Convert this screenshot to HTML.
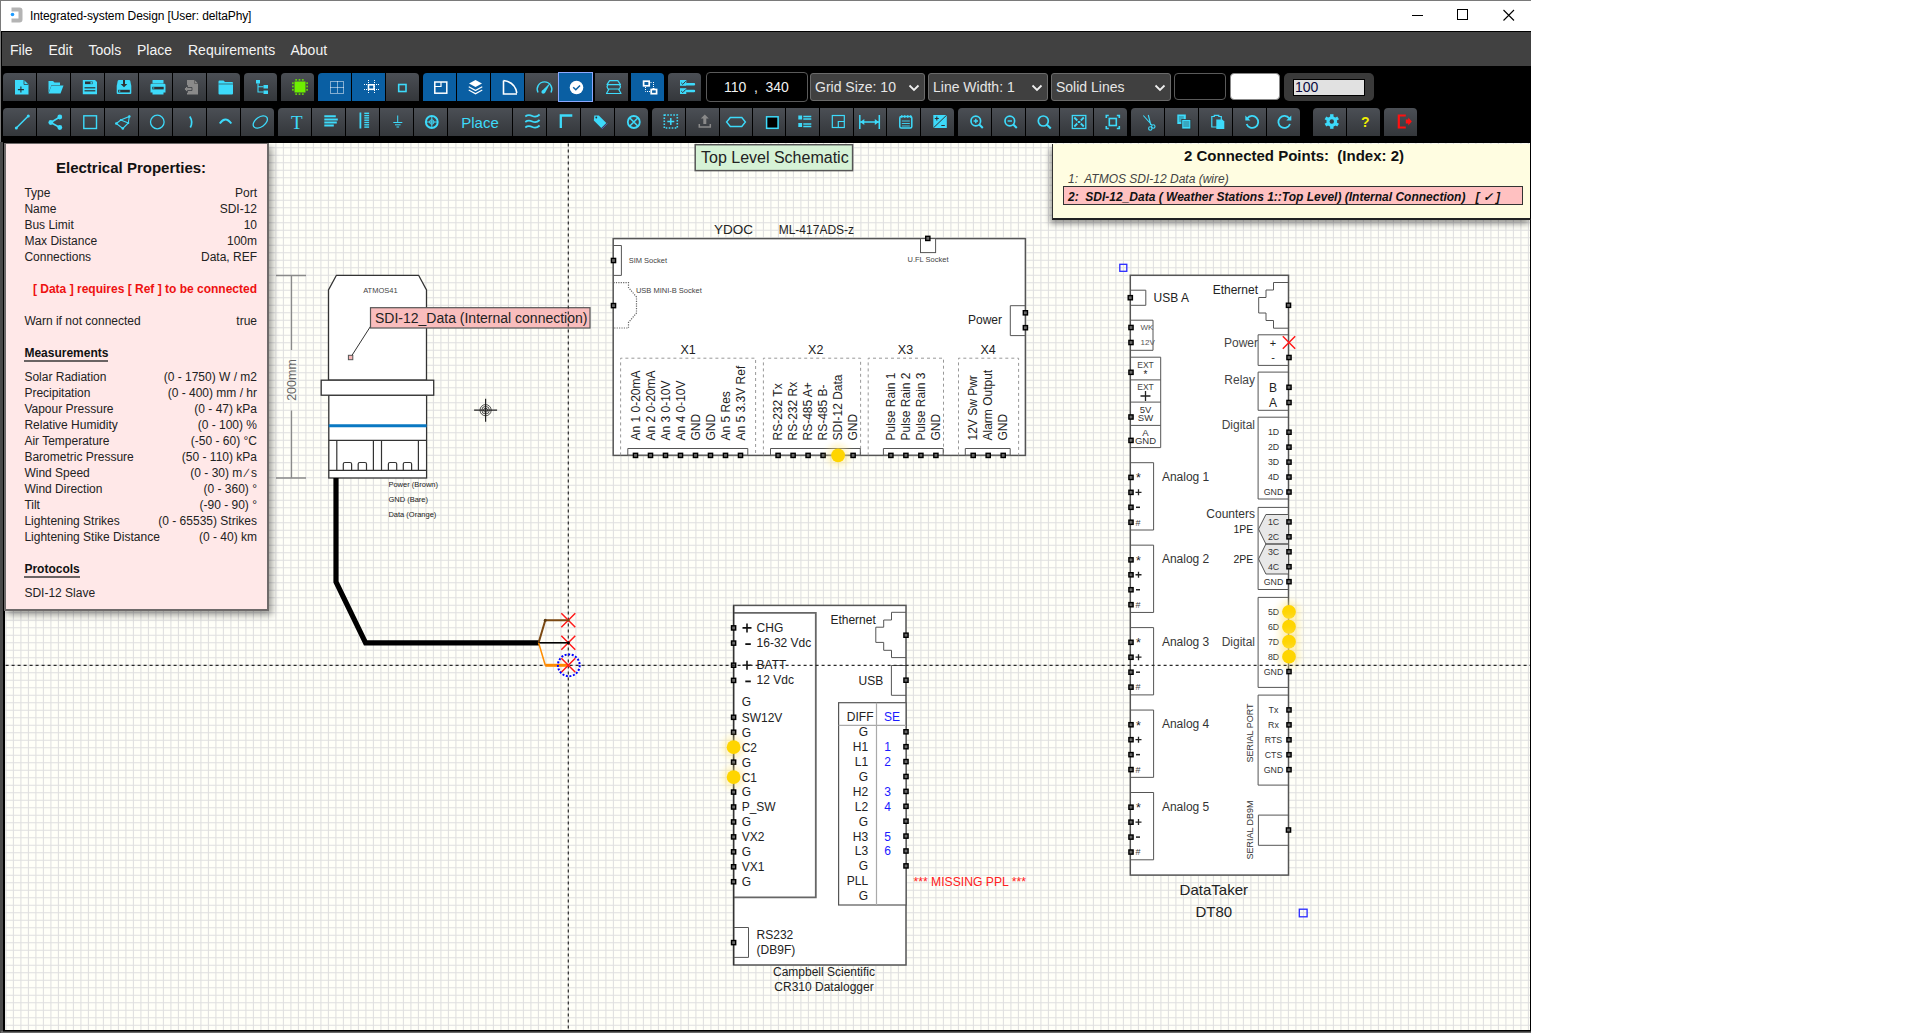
<!DOCTYPE html><html><head><meta charset="utf-8"><style>
*{margin:0;padding:0;box-sizing:border-box}
html,body{width:1906px;height:1033px;overflow:hidden;background:#fff;font-family:"Liberation Sans",sans-serif}
.a{position:absolute}
#win{position:absolute;left:0;top:0;width:1531px;height:1033px;background:#000;overflow:hidden}
#title{position:absolute;left:1px;top:1px;width:1530px;height:30px;background:#fff}
#menu{position:absolute;left:2px;top:32px;width:1529px;height:34px;background:#414141}
.mi{position:absolute;top:10px;font-size:14px;color:#f4f4f4;line-height:16px}
.b{position:absolute;height:28px;background:linear-gradient(#4b4f55,#34373b);}
.b.bl{background:#0a5fa3}
.b svg{position:absolute;left:0;top:0}
.sel{position:absolute;font-size:14px;color:#e6e6e6;background:#404040;border:1px solid #6a6a6a;border-radius:3px;height:28px;line-height:26px;padding-left:4px}
.txt{position:absolute;white-space:nowrap;line-height:1}
</style></head><body><div id="win"><div class="a" style="left:0;top:0;width:1531px;height:1px;background:#7a7a7a"></div><div class="a" style="left:0;top:0;width:1px;height:1033px;background:#7a7a7a"></div><div id="title"><svg class="a" style="left:9px;top:5px" width="16" height="18" viewBox="0 0 16 18"><path d="M1.5 1.5H9.5Q12.5 1.5 12.5 4.5V13.5Q12.5 16.5 9.5 16.5H1.5V12.5H8.5V5.5H1.5Z" fill="#b4b4b4"/><circle cx="2.5" cy="8.5" r="1.8" fill="#1e9bff"/></svg><div class="txt" style="left:29px;top:9px;font-size:12px;color:#000;letter-spacing:-0.1px">Integrated-system Design [User: deltaPhy]</div><svg class="a" style="left:1400px;top:-1px" width="130" height="30"><path d="M11 15.5H22" stroke="#000" stroke-width="1"/><rect x="56.5" y="9.5" width="10" height="10" fill="none" stroke="#000" stroke-width="1"/><path d="M102.5 10L113 20.5M113 10L102.5 20.5" stroke="#000" stroke-width="1.1"/></svg></div><div id="menu"><div class="mi" style="left:8px">File</div><div class="mi" style="left:46.5px">Edit</div><div class="mi" style="left:86.5px">Tools</div><div class="mi" style="left:135px">Place</div><div class="mi" style="left:186px">Requirements</div><div class="mi" style="left:288.5px">About</div></div><div class="b" style="left:3px;top:73px;width:33px;border-radius:4px 0 0 0;"><svg width="33" height="28" viewBox="0 0 33 28"><path d="M12 7H21L25.5 11.5V21.5H12Z" fill="#3ddafa"/><path d="M21 7V11.5H25.5" fill="none" stroke="#3a3d42" stroke-width=".8"/><path d="M14.9 16.6H20.9M17.9 13.6V19.6" stroke="#2b2e33" stroke-width="1.1"/></svg></div><div class="b" style="left:37px;top:73px;width:33px;border-radius:0;"><svg width="33" height="28" viewBox="0 0 33 28"><path d="M11.5 8H16L17.5 9.5H23V12H14.5L11.5 20Z" fill="#3ddafa"/><path d="M14.5 12.5H26.5L23.5 20.5H11.5Z" fill="#3ddafa"/></svg></div><div class="b" style="left:71px;top:73px;width:33px;border-radius:0;"><svg width="33" height="28" viewBox="0 0 33 28"><path d="M11.8 7H24L26 9V21.3H11.8Z" fill="#3ddafa"/><rect x="14" y="8.5" width="7.5" height="2.6" fill="#2f3236"/><rect x="19.5" y="8.8" width="1.4" height="2" fill="#3ddafa"/><rect x="13.5" y="14.2" width="10.8" height="1.2" fill="#2f3236"/><rect x="13.5" y="17.2" width="10.8" height="1.2" fill="#2f3236"/></svg></div><div class="b" style="left:105px;top:73px;width:33px;border-radius:0;"><svg width="33" height="28" viewBox="0 0 33 28"><path d="M14 7H24Q25 7 25.3 8L26.3 13V20Q26.3 21 25.3 21H12.7Q11.7 21 11.7 20V13L12.7 8Q13 7 14 7Z" fill="#3ddafa"/><path d="M18 7V11H15.7L19 14.3L22.3 11H20V7Z" fill="#2f3236"/><rect x="13.2" y="16.8" width="11.6" height="2.6" fill="#2f3236"/><rect x="14" y="17.5" width="1.3" height="1.2" fill="#3ddafa"/></svg></div><div class="b" style="left:139px;top:73px;width:33px;border-radius:0;"><svg width="33" height="28" viewBox="0 0 33 28"><rect x="13.5" y="7" width="11" height="3.5" rx=".5" fill="#3ddafa"/><path d="M11.5 12Q11.5 10.8 12.7 10.8H25.3Q26.5 10.8 26.5 12V19.5H24.5V21.5H13.5V19.5H11.5Z" fill="#3ddafa"/><rect x="13.3" y="13.8" width="11.4" height="2.6" fill="#2f3236"/><rect x="14" y="14.5" width="1.3" height="1" fill="#3ddafa"/></svg></div><div class="b" style="left:173px;top:73px;width:33px;border-radius:0;"><svg width="33" height="28" viewBox="0 0 33 28"><path d="M14 7H21.5L25 10.5V21.5H14Z" fill="#8a8a8a"/><path d="M21.5 7V10.5H25" fill="none" stroke="#555" stroke-width=".7"/><path d="M11 16L14.5 12.5V14.5H19V17.5H14.5V19.5Z" fill="#8a8a8a" stroke="#3a3d42" stroke-width=".8"/></svg></div><div class="b" style="left:207px;top:73px;width:33px;border-radius:0 4px 0 0;"><svg width="33" height="28" viewBox="0 0 33 28"><path d="M11.5 8.5Q11.5 7.5 12.5 7.5H16.5L18 9H25Q26 9 26 10V20.5Q26 21.5 25 21.5H12.5Q11.5 21.5 11.5 20.5Z" fill="#3ddafa"/><path d="M11.5 11H26" stroke="#2f3236" stroke-width=".6"/></svg></div><div class="b" style="left:244px;top:73px;width:33px;border-radius:4px 4px 0 0;"><svg width="33" height="28" viewBox="0 0 33 28"><rect x="12" y="7" width="4" height="3.5" fill="#3ddafa"/><rect x="19.5" y="12" width="4.5" height="3.5" fill="#3ddafa"/><rect x="19.5" y="17.5" width="4.5" height="3.5" fill="#3ddafa"/><path d="M14 10.5V19H19.5M14 13.7H19.5" fill="none" stroke="#3ddafa" stroke-width="1.1"/></svg></div><div class="b" style="left:281px;top:73px;width:33px;border-radius:4px 4px 0 0;"><svg width="33" height="28" viewBox="0 0 33 28"><rect x="13.5" y="8.5" width="11" height="11" fill="#6ef000"/><rect x="14.3" y="6.2" width="1.8" height="1.4" fill="#6ef000"/><rect x="14.3" y="20.4" width="1.8" height="1.4" fill="#6ef000"/><rect x="11.2" y="9.3" width="1.4" height="1.8" fill="#6ef000"/><rect x="25.4" y="9.3" width="1.4" height="1.8" fill="#6ef000"/><rect x="17.6" y="6.2" width="1.8" height="1.4" fill="#6ef000"/><rect x="17.6" y="20.4" width="1.8" height="1.4" fill="#6ef000"/><rect x="11.2" y="12.600000000000001" width="1.4" height="1.8" fill="#6ef000"/><rect x="25.4" y="12.600000000000001" width="1.4" height="1.8" fill="#6ef000"/><rect x="20.9" y="6.2" width="1.8" height="1.4" fill="#6ef000"/><rect x="20.9" y="20.4" width="1.8" height="1.4" fill="#6ef000"/><rect x="11.2" y="15.9" width="1.4" height="1.8" fill="#6ef000"/><rect x="25.4" y="15.9" width="1.4" height="1.8" fill="#6ef000"/></svg></div><div class="b bl" style="left:318px;top:73px;width:33px;border-radius:4px 0 0 0;"><svg width="33" height="28" viewBox="0 0 33 28"><path d="M12.5 8.5H25.5V20.5H12.5ZM19.5 8.5V20.5M12.5 14.5H25.5" fill="none" stroke="#fff" stroke-width="1" stroke-dasharray="1 1"/></svg></div><div class="b bl" style="left:352px;top:73px;width:33px;border-radius:0;"><svg width="33" height="28" viewBox="0 0 33 28"><rect x="16.5" y="11.8" width="5.5" height="4.5" fill="none" stroke="#fff" stroke-width="1.6"/><path d="M16.5 7V21M22.5 7V21M12 11.5H27M12 16.5H27" fill="none" stroke="#fff" stroke-width="1" stroke-dasharray="1 1"/></svg></div><div class="b" style="left:386px;top:73px;width:33px;border-radius:0 4px 0 0;"><svg width="33" height="28" viewBox="0 0 33 28"><rect x="12.7" y="11.5" width="7.3" height="7" fill="none" stroke="#3ddafa" stroke-width="1.6"/></svg></div><div class="b bl" style="left:423px;top:73px;width:33px;border-radius:4px 0 0 0;"><svg width="33" height="28" viewBox="0 0 33 28"><rect x="11.8" y="9" width="12" height="11.2" fill="none" stroke="#fff" stroke-width="1.5"/><path d="M11.8 13.5H18V9" fill="none" stroke="#fff" stroke-width="1.2"/></svg></div><div class="b bl" style="left:457px;top:73px;width:33px;border-radius:0;"><svg width="33" height="28" viewBox="0 0 33 28"><path d="M18.5 7L25 10.5L18.5 14L12 10.5Z" fill="#fff"/><path d="M12 13.3L18.5 16.8L25 13.3L25.5 14.3L18.5 18.3L11.5 14.3Z" fill="#fff"/><path d="M12 16.5L18.5 20L25 16.5L25.5 17.5L18.5 21.5L11.5 17.5Z" fill="#fff"/></svg></div><div class="b bl" style="left:491px;top:73px;width:33px;border-radius:0;"><svg width="33" height="28" viewBox="0 0 33 28"><path d="M12.5 7.5V21H26M12.5 7.5Q24 9 25.8 20" fill="none" stroke="#fff" stroke-width="1.6"/></svg></div><div class="b" style="left:525px;top:73px;width:33px;border-radius:0;"><svg width="33" height="28" viewBox="0 0 33 28"><path d="M13 19.5A7.3 7.3 0 1 1 26 19.5" fill="none" stroke="#3ddafa" stroke-width="1.4"/><path d="M16.8 18L25.8 9.3L19.8 20.2Z" fill="#3ddafa"/><circle cx="18.2" cy="19" r="1.8" fill="#3ddafa"/></svg></div><div class="a" style="left:558px;top:72px;width:35px;height:30px;border:1px solid #8ea9ff;background:#0a5fa3"><svg width="33" height="28" viewBox="0 0 33 28" style="position:absolute;left:0;top:0"><circle cx="17.5" cy="14.5" r="6.8" fill="#fff"/><path d="M14.2 14.3L16.8 16.8L21 12.5" fill="none" stroke="#0a5fa3" stroke-width="1.5"/></svg></div><div class="b" style="left:595px;top:73px;width:33px;border-radius:0;"><svg width="33" height="28" viewBox="0 0 33 28"><path d="M14.6 7.6H22.8L25.5 11.6H12ZM13 11.6L12 13.8L13 16H24.5L25.5 13.8L24.5 11.6M14 16H23.5L26 20.5H11.5Z" fill="none" stroke="#3ddafa" stroke-width="1.2" stroke-linejoin="round"/></svg></div><div class="b bl" style="left:631px;top:73px;width:33px;border-radius:0 4px 0 0;"><svg width="33" height="28" viewBox="0 0 33 28"><rect x="12.6" y="8.2" width="5.6" height="4.6" fill="none" stroke="#fff" stroke-width="1.7"/><rect x="20.2" y="16.5" width="5.4" height="4.2" fill="none" stroke="#fff" stroke-width="1.7"/><path d="M19.5 9.5H21.5M22.5 9V14M14.5 14V18.5H19" fill="none" stroke="#fff" stroke-width="1" stroke-dasharray="1 1"/><rect x="21.5" y="15" width="2" height="1.5" fill="#fff"/></svg></div><div class="b" style="left:668px;top:73px;width:33px;border-radius:4px 4px 0 0;"><svg width="33" height="28" viewBox="0 0 33 28"><rect x="12" y="7" width="6.3" height="5.8" fill="#3ddafa"/><rect x="12" y="15.2" width="6.3" height="5.8" fill="#3ddafa"/><path d="M13.2 9.8L14.8 11.4L17.8 8.2M13.2 18L14.8 19.6L17.8 16.4" fill="none" stroke="#2f3236" stroke-width="1"/><path d="M19 11.3H26M19 18H26" stroke="#3ddafa" stroke-width="2.4" stroke-linecap="round"/></svg></div><div class="a" style="left:706px;top:72px;width:102px;height:30px;background:#000;border:1px solid #5a5a5a;border-radius:4px;color:#f2f2f2;font-size:14px;line-height:28px"><span class="a" style="left:17px;top:-0.5px">110</span><span class="a" style="left:47px;top:-0.5px">,</span><span class="a" style="left:58.5px;top:-0.5px">340</span></div><div class="sel" style="left:810px;top:73px;width:115px">Grid Size: 10<svg class="a" style="left:97px;top:9px" width="12" height="10"><path d="M1.5 2.5L6 7L10.5 2.5" fill="none" stroke="#eee" stroke-width="1.8"/></svg></div><div class="sel" style="left:928px;top:73px;width:120px">Line Width: 1<svg class="a" style="left:102px;top:9px" width="12" height="10"><path d="M1.5 2.5L6 7L10.5 2.5" fill="none" stroke="#eee" stroke-width="1.8"/></svg></div><div class="sel" style="left:1051px;top:73px;width:120px">Solid Lines<svg class="a" style="left:102px;top:9px" width="12" height="10"><path d="M1.5 2.5L6 7L10.5 2.5" fill="none" stroke="#eee" stroke-width="1.8"/></svg></div><div class="a" style="left:1174px;top:73px;width:52px;height:27px;background:#000;border:1px solid #5a5a5a;border-radius:4px"></div><div class="a" style="left:1230px;top:73px;width:50px;height:27px;background:#fff;border:1px solid #888;border-radius:4px"></div><div class="a" style="left:1284px;top:73px;width:90px;height:28px;background:#3a3a3a;border-radius:5px"><div class="a" style="left:9px;top:6px;width:72px;height:17px;background:#e1e1e1;border:1px solid #000;font-size:14px;line-height:15px;color:#0a0a40;padding-left:1px">100</div></div><div class="b" style="left:3px;top:108px;width:33px;border-radius:4px 0 0 0;"><svg width="33" height="28" viewBox="0 0 33 28"><g transform="translate(0.8 -1)"><path d="M12.5 21L24.5 9" stroke="#3ddafa" stroke-width="1.5"/><circle cx="12.5" cy="21" r="1.5" fill="#3ddafa"/><circle cx="24.5" cy="9" r="1.5" fill="#3ddafa"/></g></svg></div><div class="b" style="left:37px;top:108px;width:33px;border-radius:0;"><svg width="33" height="28" viewBox="0 0 33 28"><g transform="translate(0.8 -1)"><circle cx="13" cy="15.5" r="2.4" fill="#3ddafa"/><circle cx="22" cy="10" r="2.4" fill="#3ddafa"/><circle cx="22" cy="20.5" r="2.4" fill="#3ddafa"/><path d="M13 15.5L22 10M13 15.5L22 20.5" stroke="#3ddafa" stroke-width="1.5"/></g></svg></div><div class="b" style="left:71px;top:108px;width:33px;border-radius:0;"><svg width="33" height="28" viewBox="0 0 33 28"><g transform="translate(0.8 -1)"><rect x="12" y="8.8" width="12.7" height="12.7" fill="none" stroke="#3ddafa" stroke-width="1.4"/></g></svg></div><div class="b" style="left:105px;top:108px;width:33px;border-radius:0;"><svg width="33" height="28" viewBox="0 0 33 28"><g transform="translate(0.8 -1)"><path d="M10.5 16.5L15 13L23.5 9.5L22.5 16L17 21.5Z M15 13L22.5 16" fill="none" stroke="#3ddafa" stroke-width="1.1"/><circle cx="10.5" cy="16.5" r="1.3" fill="#3ddafa"/><circle cx="23.5" cy="9.5" r="1.3" fill="#3ddafa"/><circle cx="17" cy="21.5" r="1.3" fill="#3ddafa"/><circle cx="15" cy="13" r="1" fill="#3ddafa"/><circle cx="22.5" cy="16" r="1" fill="#3ddafa"/></g></svg></div><div class="b" style="left:139px;top:108px;width:33px;border-radius:0;"><svg width="33" height="28" viewBox="0 0 33 28"><g transform="translate(0.8 -1)"><circle cx="17.5" cy="15" r="6.8" fill="none" stroke="#3ddafa" stroke-width="1.3"/></g></svg></div><div class="b" style="left:173px;top:108px;width:33px;border-radius:0;"><svg width="33" height="28" viewBox="0 0 33 28"><g transform="translate(0.8 -1)"><path d="M16 9.5Q19.5 15 16.5 20.5" fill="none" stroke="#3ddafa" stroke-width="1.7"/></g></svg></div><div class="b" style="left:207px;top:108px;width:33px;border-radius:0;"><svg width="33" height="28" viewBox="0 0 33 28"><g transform="translate(0.8 -1)"><path d="M12 16.5Q17.5 8.5 23.5 16.5" fill="none" stroke="#3ddafa" stroke-width="2"/></g></svg></div><div class="b" style="left:241px;top:108px;width:33px;border-radius:0 4px 0 0;"><svg width="33" height="28" viewBox="0 0 33 28"><g transform="translate(0.8 -1)"><ellipse cx="18.5" cy="15" rx="8" ry="4.8" transform="rotate(-35 18.5 15)" fill="none" stroke="#3ddafa" stroke-width="1.3"/></g></svg></div><div class="b" style="left:278px;top:108px;width:33px;border-radius:4px 0 0 0;"><svg width="33" height="28" viewBox="0 0 33 28"><g transform="translate(0.8 -1)"><text x="18" y="22" font-family="Liberation Serif" font-size="19" fill="#3ddafa" text-anchor="middle">T</text></g></svg></div><div class="b" style="left:312px;top:108px;width:33px;border-radius:0;"><svg width="33" height="28" viewBox="0 0 33 28"><g transform="translate(0.8 -1)"><path d="M11.5 9.2H23M11.5 12.5H25M11.5 15.5H24M11.5 18.5H21" stroke="#3ddafa" stroke-width="2"/></g></svg></div><div class="b" style="left:346px;top:108px;width:33px;border-radius:0;"><svg width="33" height="28" viewBox="0 0 33 28"><g transform="translate(0.8 -1)"><path d="M13.6 5.5V21.5" stroke="#3ddafa" stroke-width="1.8"/><rect x="17.5" y="5.6" width="4.8" height="1.4" fill="#3ddafa"/><rect x="17.5" y="7.8999999999999995" width="4.8" height="1.4" fill="#3ddafa"/><rect x="17.5" y="10.2" width="4.8" height="1.4" fill="#3ddafa"/><rect x="17.5" y="12.5" width="4.8" height="1.4" fill="#3ddafa"/><rect x="17.5" y="14.799999999999999" width="4.8" height="1.4" fill="#3ddafa"/><rect x="17.5" y="17.1" width="4.8" height="1.4" fill="#3ddafa"/><rect x="17.5" y="19.4" width="4.8" height="1.4" fill="#3ddafa"/></g></svg></div><div class="b" style="left:380px;top:108px;width:33px;border-radius:0;"><svg width="33" height="28" viewBox="0 0 33 28"><g transform="translate(0.8 -1)"><path d="M16.9 8.5V15.5M12.5 15.5H21.5M14.2 17.8H19.8M15.7 20H18.3" stroke="#3ddafa" stroke-width="1"/></g></svg></div><div class="b" style="left:414px;top:108px;width:33px;border-radius:0;"><svg width="33" height="28" viewBox="0 0 33 28"><g transform="translate(0.8 -1)"><circle cx="17" cy="15" r="5.9" fill="none" stroke="#3ddafa" stroke-width="2"/><path d="M17 9V21M11 15H23" stroke="#3ddafa" stroke-width="1"/><circle cx="17" cy="15" r="2.2" fill="none" stroke="#3ddafa" stroke-width="1"/></g></svg></div><div class="b" style="left:448px;top:108px;width:64px"><div class="a" style="left:0;width:64px;text-align:center;top:7px;font-size:15px;color:#3ddafa;line-height:15px">Place</div></div><div class="b" style="left:513px;top:108px;width:33px;border-radius:0;"><svg width="33" height="28" viewBox="0 0 33 28"><g transform="translate(0.8 -1)"><path d="M11.5 9.5Q14.5 7.2 18.5 9T25.8 7.5M11.5 15Q14.5 12.7 18.5 14.5T25.8 13M11.5 20.5Q14.5 18.2 18.5 20T25.8 18.5" fill="none" stroke="#3ddafa" stroke-width="1.8"/></g></svg></div><div class="b" style="left:547px;top:108px;width:33px;border-radius:0;"><svg width="33" height="28" viewBox="0 0 33 28"><g transform="translate(0.8 -1)"><path d="M13 21V8.5H24.5" fill="none" stroke="#3ddafa" stroke-width="2.3"/></g></svg></div><div class="b" style="left:581px;top:108px;width:33px;border-radius:0;"><svg width="33" height="28" viewBox="0 0 33 28"><g transform="translate(0.8 -1)"><path d="M12.5 8.5H17L24.5 16L19.5 21L12 13.5Z" fill="#3ddafa"/><circle cx="14.5" cy="10.5" r=".9" fill="#2f3236"/><path d="M25.5 16.5L20 22" stroke="#5a70f0" stroke-width=".7"/></g></svg></div><div class="b" style="left:615px;top:108px;width:33px;border-radius:0 4px 0 0;"><svg width="33" height="28" viewBox="0 0 33 28"><g transform="translate(0.8 -1)"><circle cx="18" cy="15" r="6" fill="none" stroke="#3ddafa" stroke-width="1.8"/><path d="M14 11L22 19M22 11L14 19" stroke="#3ddafa" stroke-width="1.6"/></g></svg></div><div class="b" style="left:652px;top:108px;width:33px;border-radius:4px 0 0 0;"><svg width="33" height="28" viewBox="0 0 33 28"><g transform="translate(0.8 -1)"><rect x="11.5" y="8" width="13" height="13" fill="none" stroke="#3ddafa" stroke-width="1.6" stroke-dasharray="1.6 1.4"/><path d="M18 11V18M14.5 14.5H21.5" stroke="#3ddafa" stroke-width="1.5"/></g></svg></div><div class="b" style="left:686px;top:108px;width:33px;border-radius:0;"><svg width="33" height="28" viewBox="0 0 33 28"><g transform="translate(0.8 -1)"><path d="M18 7.5L22 11.5H19.5V17H16.5V11.5H14Z" fill="#8a8a8a"/><path d="M12.5 17V20H23.5V17" fill="none" stroke="#8a8a8a" stroke-width="1.5"/></g></svg></div><div class="b" style="left:720px;top:108px;width:32px;border-radius:0;"><svg width="32" height="28" viewBox="0 0 32 28"><g transform="translate(0.8 -1)"><path d="M5.8 15L9.5 10.5H21L24.6 15L21 19.5H9.5Z" fill="none" stroke="#3ddafa" stroke-width="1.4"/></g></svg></div><div class="b" style="left:753px;top:108px;width:32px;border-radius:0;"><svg width="32" height="28" viewBox="0 0 32 28"><g transform="translate(0.8 -1)"><rect x="12.8" y="9.8" width="11.5" height="11.5" fill="#000" stroke="#3ddafa" stroke-width="1.5"/></g></svg></div><div class="b" style="left:786px;top:108px;width:33px;border-radius:0;"><svg width="33" height="28" viewBox="0 0 33 28"><g transform="translate(0.8 -1)"><rect x="11.5" y="8.5" width="3.8" height="4" fill="#3ddafa"/><rect x="11.5" y="16" width="3.8" height="4" fill="#3ddafa"/><path d="M16.5 9.5H24.5M16.5 12H24.5M16.5 17H24.5M16.5 19.5H24.5" stroke="#3ddafa" stroke-width="1.6"/></g></svg></div><div class="b" style="left:820px;top:108px;width:33px;border-radius:0;"><svg width="33" height="28" viewBox="0 0 33 28"><g transform="translate(0.8 -1)"><rect x="11.5" y="8.5" width="12" height="12" fill="none" stroke="#3ddafa" stroke-width="1.2"/><path d="M17.5 20.5V14.5H23.5" fill="none" stroke="#3ddafa" stroke-width="1.2"/></g></svg></div><div class="b" style="left:854px;top:108px;width:32px;border-radius:0;"><svg width="32" height="28" viewBox="0 0 32 28"><g transform="translate(0.8 -1)"><path d="M5 8V22M24.5 8V22M5.5 15H24" stroke="#3ddafa" stroke-width="1.5"/><path d="M5.5 15L9.5 12V18ZM24 15L20 12V18Z" fill="#3ddafa"/></g></svg></div><div class="b" style="left:887px;top:108px;width:33px;border-radius:0;"><svg width="33" height="28" viewBox="0 0 33 28"><g transform="translate(0.8 -1)"><rect x="12" y="9.5" width="12" height="11.5" rx="1.5" fill="none" stroke="#3ddafa" stroke-width="1.5"/><path d="M14 8V11M17 8V11M20 8V11M23 8V11" stroke="#3ddafa" stroke-width="1"/><path d="M14 14H22M14 16.5H22M14 19H22" stroke="#3ddafa" stroke-width=".9"/></g></svg></div><div class="b" style="left:921px;top:108px;width:33px;border-radius:0 4px 0 0;"><svg width="33" height="28" viewBox="0 0 33 28"><g transform="translate(0.8 -1)"><rect x="11.5" y="8" width="13.5" height="13" fill="#3ddafa"/><path d="M11.5 21L25 8" stroke="#2f3236" stroke-width="1"/><path d="M13 11.5H17M15 9.5V13.5M19.5 18.5H23" stroke="#2f3236" stroke-width="1.1"/></g></svg></div><div class="b" style="left:958px;top:108px;width:33px;border-radius:4px 0 0 0;"><svg width="33" height="28" viewBox="0 0 33 28"><g transform="translate(0.8 -1)"><circle cx="17" cy="14" r="4.8" fill="none" stroke="#3ddafa" stroke-width="1.7"/><path d="M20.5 17.5L24 21" stroke="#3ddafa" stroke-width="2"/><path d="M14.8 14H19.2M17 11.8V16.2" stroke="#3ddafa" stroke-width="1.4"/></g></svg></div><div class="b" style="left:992px;top:108px;width:33px;border-radius:0;"><svg width="33" height="28" viewBox="0 0 33 28"><g transform="translate(0.8 -1)"><circle cx="17" cy="14" r="4.8" fill="none" stroke="#3ddafa" stroke-width="1.7"/><path d="M20.5 17.5L24 21" stroke="#3ddafa" stroke-width="2"/><path d="M14.8 14H19.2" stroke="#3ddafa" stroke-width="1.4"/></g></svg></div><div class="b" style="left:1026px;top:108px;width:33px;border-radius:0;"><svg width="33" height="28" viewBox="0 0 33 28"><g transform="translate(0.8 -1)"><circle cx="16.5" cy="14" r="5" fill="none" stroke="#3ddafa" stroke-width="1.7"/><path d="M20.2 17.7L24 21.5" stroke="#3ddafa" stroke-width="2"/></g></svg></div><div class="b" style="left:1060px;top:108px;width:33px;border-radius:0;"><svg width="33" height="28" viewBox="0 0 33 28"><g transform="translate(0.8 -1)"><rect x="11.5" y="8.5" width="13.5" height="13" fill="none" stroke="#3ddafa" stroke-width="1.3"/><path d="M13.5 10.5L16.5 13.5M23 10.5L20 13.5M13.5 19.5L16.5 16.5M23 19.5L20 16.5" stroke="#3ddafa" stroke-width="1.8"/><rect x="17" y="14" width="2.5" height="2" fill="#3ddafa"/></g></svg></div><div class="b" style="left:1094px;top:108px;width:33px;border-radius:0 4px 0 0;"><svg width="33" height="28" viewBox="0 0 33 28"><g transform="translate(0.8 -1)"><path d="M11.5 11V8.5H14M22 8.5H24.5V11M24.5 19V21.5H22M14 21.5H11.5V19" fill="none" stroke="#3ddafa" stroke-width="1.6"/><rect x="14.5" y="11.5" width="7" height="7" fill="none" stroke="#3ddafa" stroke-width="1.6"/></g></svg></div><div class="b" style="left:1131px;top:108px;width:33px;border-radius:4px 0 0 0;"><svg width="33" height="28" viewBox="0 0 33 28"><g transform="translate(0.8 -1)"><path d="M11.5 8.5L20 18M16.5 8L19 18" stroke="#3ddafa" stroke-width="1.1"/><circle cx="21.5" cy="19.5" r="1.7" fill="none" stroke="#3ddafa" stroke-width="1.1"/><circle cx="18.5" cy="21.5" r="1.7" fill="none" stroke="#3ddafa" stroke-width="1.1"/></g></svg></div><div class="b" style="left:1165px;top:108px;width:33px;border-radius:0;"><svg width="33" height="28" viewBox="0 0 33 28"><g transform="translate(0.8 -1)"><rect x="11.5" y="7.5" width="8.5" height="9.5" fill="#3ddafa"/><rect x="16" y="12.5" width="9" height="9.5" fill="#3ddafa" stroke="#2f3236" stroke-width=".8"/><path d="M13 10H18M13 12H18M13 14H15.5M17.5 15H23.5M17.5 17H23.5M17.5 19H23.5" stroke="#2f3236" stroke-width=".6"/></g></svg></div><div class="b" style="left:1199px;top:108px;width:33px;border-radius:0;"><svg width="33" height="28" viewBox="0 0 33 28"><g transform="translate(0.8 -1)"><path d="M12 9.5H14.5V8.3H19V9.5H21.5V20H12Z" fill="none" stroke="#3ddafa" stroke-width="1.2"/><path d="M16.5 12.5H22.5L24.5 14.5V22H16.5Z" fill="#3ddafa"/></g></svg></div><div class="b" style="left:1233px;top:108px;width:33px;border-radius:0;"><svg width="33" height="28" viewBox="0 0 33 28"><g transform="translate(0.8 -1)"><path d="M13.5 11.5A6 6 0 1 1 12.8 17" fill="none" stroke="#3ddafa" stroke-width="1.8"/><path d="M11.5 8.5V13.5H16.5Z" fill="#3ddafa"/></g></svg></div><div class="b" style="left:1267px;top:108px;width:33px;border-radius:0 4px 0 0;"><svg width="33" height="28" viewBox="0 0 33 28"><g transform="translate(0.8 -1)"><path d="M21.5 11.5A6 6 0 1 0 22.2 17" fill="none" stroke="#3ddafa" stroke-width="1.8"/><path d="M23.5 8.5V13.5H18.5Z" fill="#3ddafa"/></g></svg></div><div class="b" style="left:1313px;top:108px;width:33px;border-radius:4px 0 0 0;"><svg width="33" height="28" viewBox="0 0 33 28"><g transform="translate(0.8 -1)"><rect x="16.3" y="7.2" width="3.4" height="3" fill="#3ddafa" transform="rotate(0 18 14.5)"/><rect x="16.3" y="7.2" width="3.4" height="3" fill="#3ddafa" transform="rotate(60 18 14.5)"/><rect x="16.3" y="7.2" width="3.4" height="3" fill="#3ddafa" transform="rotate(120 18 14.5)"/><rect x="16.3" y="7.2" width="3.4" height="3" fill="#3ddafa" transform="rotate(180 18 14.5)"/><rect x="16.3" y="7.2" width="3.4" height="3" fill="#3ddafa" transform="rotate(240 18 14.5)"/><rect x="16.3" y="7.2" width="3.4" height="3" fill="#3ddafa" transform="rotate(300 18 14.5)"/><circle cx="18" cy="14.5" r="5.3" fill="#3ddafa"/><circle cx="18" cy="14.5" r="2.2" fill="#3a3d42"/></g></svg></div><div class="b" style="left:1347px;top:108px;width:33px;border-radius:0 4px 0 0;"><svg width="33" height="28" viewBox="0 0 33 28"><g transform="translate(0.8 -1)"><text x="17.5" y="19.5" font-family="Liberation Sans" font-weight="bold" font-size="14" fill="#f0f000" text-anchor="middle">?</text></g></svg></div><div class="b" style="left:1384px;top:108px;width:33px;border-radius:4px 4px 0 0;"><svg width="33" height="28" viewBox="0 0 33 28"><g transform="translate(0.8 -1)"><path d="M21 8.5H14V20.5H21" fill="none" stroke="#ff1010" stroke-width="2.2"/><path d="M21 12.5H23.5V10.5L27 14.5L23.5 18.5V16.5H21Z" fill="#ff1010"/></g></svg></div><svg class="a" style="left:0;top:0" width="1531" height="1033" viewBox="0 0 1531 1033"><defs><filter id="blur" x="-1" y="-1" width="3" height="3"><feGaussianBlur stdDeviation="3"/></filter><filter id="blur2" x="-1" y="-1" width="3" height="3"><feGaussianBlur stdDeviation="1.5"/></filter><clipPath id="cclip"><rect x="5" y="143" width="1525" height="887"/></clipPath><filter id="shadow" x="-.1" y="-.1" width="1.2" height="1.2"><feGaussianBlur stdDeviation="3"/></filter></defs><rect x="0" y="142" width="3" height="891" fill="#4a4a4a"/><rect x="1" y="1031" width="1530" height="2" fill="#6a6a6a"/><g clip-path="url(#cclip)"><rect x="5" y="143" width="1525" height="887" fill="#fffff8"/><path d="M5.899999999999977 143V1030M13.399999999999977 143V1030M20.899999999999977 143V1030M28.399999999999977 143V1030M35.89999999999998 143V1030M43.39999999999998 143V1030M50.89999999999998 143V1030M58.39999999999998 143V1030M65.89999999999998 143V1030M73.39999999999998 143V1030M80.89999999999998 143V1030M88.39999999999998 143V1030M95.89999999999998 143V1030M103.39999999999998 143V1030M110.89999999999998 143V1030M118.39999999999998 143V1030M125.89999999999998 143V1030M133.39999999999998 143V1030M140.89999999999998 143V1030M148.39999999999998 143V1030M155.89999999999998 143V1030M163.39999999999998 143V1030M170.89999999999998 143V1030M178.39999999999998 143V1030M185.89999999999998 143V1030M193.39999999999998 143V1030M200.89999999999998 143V1030M208.39999999999998 143V1030M215.89999999999998 143V1030M223.39999999999998 143V1030M230.89999999999998 143V1030M238.39999999999998 143V1030M245.89999999999998 143V1030M253.39999999999998 143V1030M260.9 143V1030M268.4 143V1030M275.9 143V1030M283.4 143V1030M290.9 143V1030M298.4 143V1030M305.9 143V1030M313.4 143V1030M320.9 143V1030M328.4 143V1030M335.9 143V1030M343.4 143V1030M350.9 143V1030M358.4 143V1030M365.9 143V1030M373.4 143V1030M380.9 143V1030M388.4 143V1030M395.9 143V1030M403.4 143V1030M410.9 143V1030M418.4 143V1030M425.9 143V1030M433.4 143V1030M440.9 143V1030M448.4 143V1030M455.9 143V1030M463.4 143V1030M470.9 143V1030M478.4 143V1030M485.9 143V1030M493.4 143V1030M500.9 143V1030M508.4 143V1030M515.9 143V1030M523.4 143V1030M530.9 143V1030M538.4 143V1030M545.9 143V1030M553.4 143V1030M560.9 143V1030M568.4 143V1030M575.9 143V1030M583.4 143V1030M590.9 143V1030M598.4 143V1030M605.9 143V1030M613.4 143V1030M620.9 143V1030M628.4 143V1030M635.9 143V1030M643.4 143V1030M650.9 143V1030M658.4 143V1030M665.9 143V1030M673.4 143V1030M680.9 143V1030M688.4 143V1030M695.9 143V1030M703.4 143V1030M710.9 143V1030M718.4 143V1030M725.9 143V1030M733.4 143V1030M740.9 143V1030M748.4 143V1030M755.9 143V1030M763.4 143V1030M770.9 143V1030M778.4 143V1030M785.9 143V1030M793.4 143V1030M800.9 143V1030M808.4 143V1030M815.9 143V1030M823.4 143V1030M830.9 143V1030M838.4 143V1030M845.9 143V1030M853.4 143V1030M860.9 143V1030M868.4 143V1030M875.9 143V1030M883.4 143V1030M890.9 143V1030M898.4 143V1030M905.9 143V1030M913.4 143V1030M920.9 143V1030M928.4 143V1030M935.9 143V1030M943.4 143V1030M950.9 143V1030M958.4 143V1030M965.9 143V1030M973.4 143V1030M980.9 143V1030M988.4 143V1030M995.9 143V1030M1003.4 143V1030M1010.9 143V1030M1018.4 143V1030M1025.9 143V1030M1033.4 143V1030M1040.9 143V1030M1048.4 143V1030M1055.9 143V1030M1063.4 143V1030M1070.9 143V1030M1078.4 143V1030M1085.9 143V1030M1093.4 143V1030M1100.9 143V1030M1108.4 143V1030M1115.9 143V1030M1123.4 143V1030M1130.9 143V1030M1138.4 143V1030M1145.9 143V1030M1153.4 143V1030M1160.9 143V1030M1168.4 143V1030M1175.9 143V1030M1183.4 143V1030M1190.9 143V1030M1198.4 143V1030M1205.9 143V1030M1213.4 143V1030M1220.9 143V1030M1228.4 143V1030M1235.9 143V1030M1243.4 143V1030M1250.9 143V1030M1258.4 143V1030M1265.9 143V1030M1273.4 143V1030M1280.9 143V1030M1288.4 143V1030M1295.9 143V1030M1303.4 143V1030M1310.9 143V1030M1318.4 143V1030M1325.9 143V1030M1333.4 143V1030M1340.9 143V1030M1348.4 143V1030M1355.9 143V1030M1363.4 143V1030M1370.9 143V1030M1378.4 143V1030M1385.9 143V1030M1393.4 143V1030M1400.9 143V1030M1408.4 143V1030M1415.9 143V1030M1423.4 143V1030M1430.9 143V1030M1438.4 143V1030M1445.9 143V1030M1453.4 143V1030M1460.9 143V1030M1468.4 143V1030M1475.9 143V1030M1483.4 143V1030M1490.9 143V1030M1498.4 143V1030M1505.9 143V1030M1513.4 143V1030M1520.9 143V1030M1528.4 143V1030M5 147.8H1530M5 155.3H1530M5 162.8H1530M5 170.3H1530M5 177.8H1530M5 185.3H1530M5 192.8H1530M5 200.3H1530M5 207.8H1530M5 215.3H1530M5 222.8H1530M5 230.3H1530M5 237.8H1530M5 245.3H1530M5 252.8H1530M5 260.3H1530M5 267.8H1530M5 275.3H1530M5 282.8H1530M5 290.3H1530M5 297.8H1530M5 305.3H1530M5 312.8H1530M5 320.3H1530M5 327.8H1530M5 335.3H1530M5 342.8H1530M5 350.3H1530M5 357.8H1530M5 365.3H1530M5 372.8H1530M5 380.3H1530M5 387.8H1530M5 395.3H1530M5 402.8H1530M5 410.3H1530M5 417.8H1530M5 425.3H1530M5 432.8H1530M5 440.3H1530M5 447.8H1530M5 455.3H1530M5 462.8H1530M5 470.3H1530M5 477.8H1530M5 485.3H1530M5 492.8H1530M5 500.3H1530M5 507.8H1530M5 515.3H1530M5 522.8H1530M5 530.3H1530M5 537.8H1530M5 545.3H1530M5 552.8H1530M5 560.3H1530M5 567.8H1530M5 575.3H1530M5 582.8H1530M5 590.3H1530M5 597.8H1530M5 605.3H1530M5 612.8H1530M5 620.3H1530M5 627.8H1530M5 635.3H1530M5 642.8H1530M5 650.3H1530M5 657.8H1530M5 665.3H1530M5 672.8H1530M5 680.3H1530M5 687.8H1530M5 695.3H1530M5 702.8H1530M5 710.3H1530M5 717.8H1530M5 725.3H1530M5 732.8H1530M5 740.3H1530M5 747.8H1530M5 755.3H1530M5 762.8H1530M5 770.3H1530M5 777.8H1530M5 785.3H1530M5 792.8H1530M5 800.3H1530M5 807.8H1530M5 815.3H1530M5 822.8H1530M5 830.3H1530M5 837.8H1530M5 845.3H1530M5 852.8H1530M5 860.3H1530M5 867.8H1530M5 875.3H1530M5 882.8H1530M5 890.3H1530M5 897.8H1530M5 905.3H1530M5 912.8H1530M5 920.3H1530M5 927.8H1530M5 935.3H1530M5 942.8H1530M5 950.3H1530M5 957.8H1530M5 965.3H1530M5 972.8H1530M5 980.3H1530M5 987.8H1530M5 995.3H1530M5 1002.8H1530M5 1010.3H1530M5 1017.8H1530M5 1025.3H1530" stroke="#e0e0e0" stroke-width="1.1" fill="none"/><g font-family="Liberation Sans"><path d="M474.1 410.2H497.1M485.6 398.7V421.7" stroke="#222" stroke-width="1.2"/><circle cx="485.6" cy="410.2" r="5.6" fill="none" stroke="#222" stroke-width=".8"/><circle cx="485.6" cy="410.2" r="3.8" fill="none" stroke="#222" stroke-width=".8"/><circle cx="485.6" cy="410.2" r="2" fill="none" stroke="#222" stroke-width=".8"/><path d="M276 275.5H306M291.5 275.5V350M276 478H306M291.5 410.5V478" stroke="#8a8a8a" stroke-width="1.3" fill="none"/><text x="0" y="0" font-size="12.5" fill="#666" text-anchor="middle" transform="translate(296 380) rotate(-90)">200mm</text><path d="M336.4 275.3H418.6L426.5 290V380.2H328.5V290Z" fill="#fff" stroke="#333" stroke-width="1.3"/><rect x="328.8" y="395.2" width="97.8" height="82.8" fill="#fff" stroke="#333" stroke-width="1.3"/><rect x="321.2" y="380.2" width="112.5" height="15" fill="#fff" stroke="#333" stroke-width="1.3"/><path d="M328.8 425.7H426.6" stroke="#0a78c2" stroke-width="3"/><path d="M328.8 440.3H426.6M328.8 470.3H426.6M336.8 440.3V470.3M373.4 440.3V470.3M381.5 440.3V470.3M418.4 440.3V470.3" stroke="#333" stroke-width="1.2" fill="none"/><path d="M343.3 470.3V464Q343.3 462.5 344.8 462.5H350.1Q351.6 462.5 351.6 464V470.3" fill="none" stroke="#333" stroke-width="1.2"/><path d="M358.2 470.3V464Q358.2 462.5 359.7 462.5H365.0Q366.5 462.5 366.5 464V470.3" fill="none" stroke="#333" stroke-width="1.2"/><path d="M388.4 470.3V464Q388.4 462.5 389.9 462.5H395.2Q396.7 462.5 396.7 464V470.3" fill="none" stroke="#333" stroke-width="1.2"/><path d="M403.3 470.3V464Q403.3 462.5 404.8 462.5H410.1Q411.6 462.5 411.6 464V470.3" fill="none" stroke="#333" stroke-width="1.2"/><text x="380.4" y="293" font-size="7.5" fill="#444" text-anchor="middle" >ATMOS41</text><text x="388.4" y="487" font-size="7.5" fill="#222" text-anchor="start" >Power (Brown)</text><text x="388.4" y="502" font-size="7.5" fill="#222" text-anchor="start" >GND (Bare)</text><text x="388.4" y="517" font-size="7.5" fill="#222" text-anchor="start" >Data (Orange)</text><path d="M336 478V581.8L365.6 642.8H539" fill="none" stroke="#000" stroke-width="5.2" stroke-linejoin="miter"/><path d="M372 324L350.6 357.5" stroke="#333" stroke-width="1"/><rect x="348.4" y="355.3" width="4.4" height="4.4" fill="#f8b8b8" stroke="#555" stroke-width="1"/><rect x="370.5" y="307.7" width="219.5" height="20.3" fill="#f9bdbd" stroke="#555" stroke-width="1.2"/><text x="375" y="323" font-size="14" fill="#222" text-anchor="start" >SDI-12_Data (Internal connection)</text><rect x="695.2" y="144.7" width="157.4" height="25.9" fill="#d6f2d6" stroke="#555" stroke-width="1.5"/><text x="701" y="162.6" font-size="16" fill="#222" text-anchor="start" >Top Level Schematic</text><rect x="613.2" y="238.6" width="412.2" height="216.8" fill="#fff" stroke="#555" stroke-width="1.5"/><text x="713.9" y="233.9" font-size="13.5" fill="#222" text-anchor="start" >YDOC</text><text x="778.7" y="233.9" font-size="12" fill="#222" text-anchor="start" >ML-417ADS-z</text><path d="M613.2 245.5H621.4V275.4H613.2" fill="none" stroke="#555" stroke-width="1"/><rect x="611.40" y="258.40" width="4.2" height="4.2" fill="#666" stroke="#000" stroke-width="1.4"/><text x="628.7" y="263.2" font-size="7.5" fill="#444" text-anchor="start" >SIM Socket</text><path d="M613.5 282.7H628.5V287.5L636.5 297V313L628.5 322.5V328H613.5" fill="none" stroke="#666" stroke-width="1.2" stroke-dasharray="1.2 1.2"/><rect x="611.40" y="303.50" width="4.2" height="4.2" fill="#666" stroke="#000" stroke-width="1.4"/><text x="635.9" y="293" font-size="7.5" fill="#444" text-anchor="start" >USB MINI-B Socket</text><rect x="920.5" y="238.6" width="15.1" height="14" fill="#fff" stroke="#555" stroke-width="1"/><rect x="925.70" y="236.30" width="4.2" height="4.2" fill="#666" stroke="#000" stroke-width="1.4"/><text x="928" y="262" font-size="7.5" fill="#444" text-anchor="middle" >U.FL Socket</text><path d="M1025.4 305.7H1010.3V335.6H1025.4" fill="none" stroke="#555" stroke-width="1"/><rect x="1023.30" y="310.70" width="4.2" height="4.2" fill="#666" stroke="#000" stroke-width="1.4"/><rect x="1023.30" y="325.60" width="4.2" height="4.2" fill="#666" stroke="#000" stroke-width="1.4"/><text x="1002" y="324" font-size="12" fill="#222" text-anchor="end" >Power</text><path d="M620.6 455.4V358.2H755.6V455.4" fill="none" stroke="#999" stroke-width="1" stroke-dasharray="3 3"/><text x="688.1" y="354" font-size="12.5" fill="#222" text-anchor="middle" >X1</text><path d="M763.4 455.4V358.2H860.6V455.4" fill="none" stroke="#999" stroke-width="1" stroke-dasharray="3 3"/><text x="815.7" y="354" font-size="12.5" fill="#222" text-anchor="middle" >X2</text><path d="M868.2 455.4V358.2H943.5V455.4" fill="none" stroke="#999" stroke-width="1" stroke-dasharray="3 3"/><text x="905.5" y="354" font-size="12.5" fill="#222" text-anchor="middle" >X3</text><path d="M958.5 455.4V358.2H1018.6V455.4" fill="none" stroke="#999" stroke-width="1" stroke-dasharray="3 3"/><text x="988.1" y="354" font-size="12.5" fill="#222" text-anchor="middle" >X4</text><path d="M627.8 455.4V448.5H747.8V455.4" fill="none" stroke="#555" stroke-width="1"/><path d="M627.8 455.4H747.8" stroke="#666" stroke-width="1.2"/><rect x="633.40" y="453.30" width="4.2" height="4.2" fill="#666" stroke="#000" stroke-width="1.4"/><text x="0" y="0" font-size="12" fill="#222" transform="translate(639.7 440.5) rotate(-90)">An 1 0-20mA</text><rect x="648.40" y="453.30" width="4.2" height="4.2" fill="#666" stroke="#000" stroke-width="1.4"/><text x="0" y="0" font-size="12" fill="#222" transform="translate(654.7 440.5) rotate(-90)">An 2 0-20mA</text><rect x="663.40" y="453.30" width="4.2" height="4.2" fill="#666" stroke="#000" stroke-width="1.4"/><text x="0" y="0" font-size="12" fill="#222" transform="translate(669.7 440.5) rotate(-90)">An 3 0-10V</text><rect x="678.40" y="453.30" width="4.2" height="4.2" fill="#666" stroke="#000" stroke-width="1.4"/><text x="0" y="0" font-size="12" fill="#222" transform="translate(684.7 440.5) rotate(-90)">An 4 0-10V</text><rect x="693.40" y="453.30" width="4.2" height="4.2" fill="#666" stroke="#000" stroke-width="1.4"/><text x="0" y="0" font-size="12" fill="#222" transform="translate(699.7 440.5) rotate(-90)">GND</text><rect x="708.40" y="453.30" width="4.2" height="4.2" fill="#666" stroke="#000" stroke-width="1.4"/><text x="0" y="0" font-size="12" fill="#222" transform="translate(714.7 440.5) rotate(-90)">GND</text><rect x="723.40" y="453.30" width="4.2" height="4.2" fill="#666" stroke="#000" stroke-width="1.4"/><text x="0" y="0" font-size="12" fill="#222" transform="translate(729.7 440.5) rotate(-90)">An 5 Res</text><rect x="738.40" y="453.30" width="4.2" height="4.2" fill="#666" stroke="#000" stroke-width="1.4"/><text x="0" y="0" font-size="12" fill="#222" transform="translate(744.7 440.5) rotate(-90)">An 5 3.3V Ref</text><path d="M770.5 455.4V448.5H860.3V455.4" fill="none" stroke="#555" stroke-width="1"/><path d="M770.5 455.4H860.3" stroke="#666" stroke-width="1.2"/><rect x="776.00" y="453.30" width="4.2" height="4.2" fill="#666" stroke="#000" stroke-width="1.4"/><text x="0" y="0" font-size="12" fill="#222" transform="translate(782.3 440.5) rotate(-90)">RS-232 Tx</text><rect x="791.00" y="453.30" width="4.2" height="4.2" fill="#666" stroke="#000" stroke-width="1.4"/><text x="0" y="0" font-size="12" fill="#222" transform="translate(797.3 440.5) rotate(-90)">RS-232 Rx</text><rect x="806.00" y="453.30" width="4.2" height="4.2" fill="#666" stroke="#000" stroke-width="1.4"/><text x="0" y="0" font-size="12" fill="#222" transform="translate(812.3 440.5) rotate(-90)">RS-485 A+</text><rect x="821.00" y="453.30" width="4.2" height="4.2" fill="#666" stroke="#000" stroke-width="1.4"/><text x="0" y="0" font-size="12" fill="#222" transform="translate(827.3 440.5) rotate(-90)">RS-485 B-</text><circle cx="838.1" cy="455.4" r="11" fill="#ffe680" opacity=".45" filter="url(#blur)"/><circle cx="838.1" cy="455.4" r="6.9" fill="#ffd500"/><text x="0" y="0" font-size="12" fill="#222" transform="translate(842.3 440.5) rotate(-90)">SDI-12 Data</text><rect x="851.00" y="453.30" width="4.2" height="4.2" fill="#666" stroke="#000" stroke-width="1.4"/><text x="0" y="0" font-size="12" fill="#222" transform="translate(857.3 440.5) rotate(-90)">GND</text><path d="M883.4 455.4V448.5H943.2V455.4" fill="none" stroke="#555" stroke-width="1"/><path d="M883.4 455.4H943.2" stroke="#666" stroke-width="1.2"/><rect x="888.80" y="453.30" width="4.2" height="4.2" fill="#666" stroke="#000" stroke-width="1.4"/><text x="0" y="0" font-size="12" fill="#222" transform="translate(895.1 440.5) rotate(-90)">Pulse Rain 1</text><rect x="903.80" y="453.30" width="4.2" height="4.2" fill="#666" stroke="#000" stroke-width="1.4"/><text x="0" y="0" font-size="12" fill="#222" transform="translate(910.1 440.5) rotate(-90)">Pulse Rain 2</text><rect x="918.80" y="453.30" width="4.2" height="4.2" fill="#666" stroke="#000" stroke-width="1.4"/><text x="0" y="0" font-size="12" fill="#222" transform="translate(925.1 440.5) rotate(-90)">Pulse Rain 3</text><rect x="933.80" y="453.30" width="4.2" height="4.2" fill="#666" stroke="#000" stroke-width="1.4"/><text x="0" y="0" font-size="12" fill="#222" transform="translate(940.1 440.5) rotate(-90)">GND</text><path d="M965.3 455.4V448.5H1010.2V455.4" fill="none" stroke="#555" stroke-width="1"/><path d="M965.3 455.4H1010.2" stroke="#666" stroke-width="1.2"/><rect x="971.10" y="453.30" width="4.2" height="4.2" fill="#666" stroke="#000" stroke-width="1.4"/><text x="0" y="0" font-size="12" fill="#222" transform="translate(977.4 440.5) rotate(-90)">12V Sw Pwr</text><rect x="986.10" y="453.30" width="4.2" height="4.2" fill="#666" stroke="#000" stroke-width="1.4"/><text x="0" y="0" font-size="12" fill="#222" transform="translate(992.4 440.5) rotate(-90)">Alarm Output</text><rect x="1001.10" y="453.30" width="4.2" height="4.2" fill="#666" stroke="#000" stroke-width="1.4"/><text x="0" y="0" font-size="12" fill="#222" transform="translate(1007.4 440.5) rotate(-90)">GND</text><rect x="733.6" y="605.4" width="172.4" height="359.6" fill="#fff" stroke="#555" stroke-width="1.5"/><path d="M733.6 612.9H815.8V897.3H733.6" fill="none" stroke="#666" stroke-width="1.8"/><path d="M733.6 605.4V965" stroke="#333" stroke-width="1.3"/><rect x="731.50" y="625.80" width="4.2" height="4.2" fill="#666" stroke="#000" stroke-width="1.4"/><path d="M742.5 627.9H751.5M747 623.4V632.4" stroke="#111" stroke-width="1.6"/><text x="756.6" y="631.5" font-size="12" fill="#222" text-anchor="start" >CHG</text><rect x="731.50" y="641.00" width="4.2" height="4.2" fill="#666" stroke="#000" stroke-width="1.4"/><path d="M745.3 644.1H750.8" stroke="#111" stroke-width="1.8"/><text x="756.6" y="646.7" font-size="12" fill="#222" text-anchor="start" >16-32 Vdc</text><rect x="731.50" y="663.10" width="4.2" height="4.2" fill="#666" stroke="#000" stroke-width="1.4"/><path d="M742.5 665.2H751.5M747 660.7V669.7" stroke="#111" stroke-width="1.6"/><text x="756.6" y="668.8000000000001" font-size="12" fill="#222" text-anchor="start" >BATT</text><rect x="731.50" y="678.30" width="4.2" height="4.2" fill="#666" stroke="#000" stroke-width="1.4"/><path d="M745.3 681.4H750.8" stroke="#111" stroke-width="1.8"/><text x="756.6" y="684.0" font-size="12" fill="#222" text-anchor="start" >12 Vdc</text><text x="741.7" y="705.7" font-size="12" fill="#222" text-anchor="start" >G</text><rect x="731.50" y="715.20" width="4.2" height="4.2" fill="#666" stroke="#000" stroke-width="1.4"/><text x="741.7" y="721.6999999999999" font-size="12" fill="#222" text-anchor="start" >SW12V</text><rect x="731.50" y="730.15" width="4.2" height="4.2" fill="#666" stroke="#000" stroke-width="1.4"/><text x="741.7" y="736.65" font-size="12" fill="#222" text-anchor="start" >G</text><circle cx="733.6" cy="747.1999999999999" r="11" fill="#ffe680" opacity=".45" filter="url(#blur)"/><circle cx="733.6" cy="747.1999999999999" r="6.9" fill="#ffd500"/><text x="741.7" y="751.5999999999999" font-size="12" fill="#222" text-anchor="start" >C2</text><rect x="731.50" y="760.05" width="4.2" height="4.2" fill="#666" stroke="#000" stroke-width="1.4"/><text x="741.7" y="766.55" font-size="12" fill="#222" text-anchor="start" >G</text><circle cx="733.6" cy="777.0999999999999" r="11" fill="#ffe680" opacity=".45" filter="url(#blur)"/><circle cx="733.6" cy="777.0999999999999" r="6.9" fill="#ffd500"/><text x="741.7" y="781.4999999999999" font-size="12" fill="#222" text-anchor="start" >C1</text><rect x="731.50" y="789.95" width="4.2" height="4.2" fill="#666" stroke="#000" stroke-width="1.4"/><text x="741.7" y="796.4499999999999" font-size="12" fill="#222" text-anchor="start" >G</text><rect x="731.50" y="804.90" width="4.2" height="4.2" fill="#666" stroke="#000" stroke-width="1.4"/><text x="741.7" y="811.4" font-size="12" fill="#222" text-anchor="start" >P_SW</text><rect x="731.50" y="819.85" width="4.2" height="4.2" fill="#666" stroke="#000" stroke-width="1.4"/><text x="741.7" y="826.3499999999999" font-size="12" fill="#222" text-anchor="start" >G</text><rect x="731.50" y="834.80" width="4.2" height="4.2" fill="#666" stroke="#000" stroke-width="1.4"/><text x="741.7" y="841.3" font-size="12" fill="#222" text-anchor="start" >VX2</text><rect x="731.50" y="849.75" width="4.2" height="4.2" fill="#666" stroke="#000" stroke-width="1.4"/><text x="741.7" y="856.2499999999999" font-size="12" fill="#222" text-anchor="start" >G</text><rect x="731.50" y="864.70" width="4.2" height="4.2" fill="#666" stroke="#000" stroke-width="1.4"/><text x="741.7" y="871.1999999999999" font-size="12" fill="#222" text-anchor="start" >VX1</text><rect x="731.50" y="879.65" width="4.2" height="4.2" fill="#666" stroke="#000" stroke-width="1.4"/><text x="741.7" y="886.15" font-size="12" fill="#222" text-anchor="start" >G</text><path d="M906 612.3H891.5V620H883.7V627.2H875.8V642.4H883.7V650.3H891.5V657.6H906" fill="none" stroke="#555" stroke-width="1"/><rect x="903.90" y="633.10" width="4.2" height="4.2" fill="#666" stroke="#000" stroke-width="1.4"/><text x="875.8" y="624" font-size="12" fill="#222" text-anchor="end" >Ethernet</text><path d="M906 665.5H891.4V695.3H906" fill="none" stroke="#555" stroke-width="1"/><rect x="903.90" y="678.10" width="4.2" height="4.2" fill="#666" stroke="#000" stroke-width="1.4"/><text x="883.3" y="684.6" font-size="12" fill="#222" text-anchor="end" >USB</text><rect x="838.6" y="702.7" width="67.4" height="202.3" fill="#fff" stroke="#555" stroke-width="1.2"/><path d="M876.5 702.7V905M838.6 725.4H906" stroke="#aaa" stroke-width="1.2"/><text x="873.5" y="721" font-size="12" fill="#222" text-anchor="end" >DIFF</text><text x="884" y="721" font-size="12" fill="#1a1aff" text-anchor="start" >SE</text><text x="868.1" y="736.1999999999999" font-size="12" fill="#222" text-anchor="end" >G</text><rect x="903.90" y="729.70" width="4.2" height="4.2" fill="#666" stroke="#000" stroke-width="1.4"/><text x="868.1" y="751.0999999999999" font-size="12" fill="#222" text-anchor="end" >H1</text><text x="887.7" y="751.0999999999999" font-size="12" fill="#1a1aff" text-anchor="middle" >1</text><rect x="903.90" y="744.60" width="4.2" height="4.2" fill="#666" stroke="#000" stroke-width="1.4"/><text x="868.1" y="765.9999999999999" font-size="12" fill="#222" text-anchor="end" >L1</text><text x="887.7" y="765.9999999999999" font-size="12" fill="#1a1aff" text-anchor="middle" >2</text><rect x="903.90" y="759.50" width="4.2" height="4.2" fill="#666" stroke="#000" stroke-width="1.4"/><text x="868.1" y="780.9" font-size="12" fill="#222" text-anchor="end" >G</text><rect x="903.90" y="774.40" width="4.2" height="4.2" fill="#666" stroke="#000" stroke-width="1.4"/><text x="868.1" y="795.8" font-size="12" fill="#222" text-anchor="end" >H2</text><text x="887.7" y="795.8" font-size="12" fill="#1a1aff" text-anchor="middle" >3</text><rect x="903.90" y="789.30" width="4.2" height="4.2" fill="#666" stroke="#000" stroke-width="1.4"/><text x="868.1" y="810.6999999999999" font-size="12" fill="#222" text-anchor="end" >L2</text><text x="887.7" y="810.6999999999999" font-size="12" fill="#1a1aff" text-anchor="middle" >4</text><rect x="903.90" y="804.20" width="4.2" height="4.2" fill="#666" stroke="#000" stroke-width="1.4"/><text x="868.1" y="825.5999999999999" font-size="12" fill="#222" text-anchor="end" >G</text><rect x="903.90" y="819.10" width="4.2" height="4.2" fill="#666" stroke="#000" stroke-width="1.4"/><text x="868.1" y="840.4999999999999" font-size="12" fill="#222" text-anchor="end" >H3</text><text x="887.7" y="840.4999999999999" font-size="12" fill="#1a1aff" text-anchor="middle" >5</text><rect x="903.90" y="834.00" width="4.2" height="4.2" fill="#666" stroke="#000" stroke-width="1.4"/><text x="868.1" y="855.4" font-size="12" fill="#222" text-anchor="end" >L3</text><text x="887.7" y="855.4" font-size="12" fill="#1a1aff" text-anchor="middle" >6</text><rect x="903.90" y="848.90" width="4.2" height="4.2" fill="#666" stroke="#000" stroke-width="1.4"/><text x="868.1" y="870.3" font-size="12" fill="#222" text-anchor="end" >G</text><rect x="903.90" y="863.80" width="4.2" height="4.2" fill="#666" stroke="#000" stroke-width="1.4"/><text x="868.1" y="885.1999999999999" font-size="12" fill="#222" text-anchor="end" >PLL</text><text x="868.1" y="900.0999999999999" font-size="12" fill="#222" text-anchor="end" >G</text><path d="M733.6 927.5H748.5V957.4H733.6" fill="none" stroke="#555" stroke-width="1"/><rect x="731.50" y="940.50" width="4.2" height="4.2" fill="#666" stroke="#000" stroke-width="1.4"/><text x="756.6" y="939" font-size="12" fill="#222" text-anchor="start" >RS232</text><text x="756.6" y="953.5" font-size="12" fill="#222" text-anchor="start" >(DB9F)</text><text x="824" y="976" font-size="12" fill="#222" text-anchor="middle" >Campbell Scientific</text><text x="824" y="991" font-size="12" fill="#222" text-anchor="middle" >CR310 Datalogger</text><text x="913.4" y="886" font-size="12.2" fill="#ff2222" text-anchor="start" >*** MISSING PPL ***</text><rect x="1130.3" y="275.3" width="158.2" height="599.8" fill="#fff" stroke="#555" stroke-width="1.5"/><rect x="1119.8" y="264.3" width="7" height="7" fill="none" stroke="#2a2aff" stroke-width="1.3"/><rect x="1299.3" y="909.2" width="7.8" height="7.6" fill="none" stroke="#2a2aff" stroke-width="1.3"/><path d="M1130.3 290.2H1145.8V305.3H1130.3" fill="none" stroke="#555" stroke-width="1"/><rect x="1128.20" y="295.60" width="4.2" height="4.2" fill="#666" stroke="#000" stroke-width="1.4"/><text x="1153.6" y="301.5" font-size="12" fill="#222" text-anchor="start" >USB A</text><path d="M1288.5 282.5H1273.5V290H1266V297.5H1258.7V313H1266V320.5H1273.5V328.2H1288.5" fill="none" stroke="#555" stroke-width="1"/><rect x="1286.40" y="303.20" width="4.2" height="4.2" fill="#666" stroke="#000" stroke-width="1.4"/><text x="1258" y="294.3" font-size="12" fill="#222" text-anchor="end" >Ethernet</text><path d="M1130.3 320.2H1153V350.3H1130.3" fill="none" stroke="#555" stroke-width="1"/><rect x="1128.90" y="325.40" width="4.2" height="4.2" fill="#666" stroke="#000" stroke-width="1.4"/><rect x="1128.90" y="340.40" width="4.2" height="4.2" fill="#666" stroke="#000" stroke-width="1.4"/><text x="1140.5" y="330.3" font-size="8" fill="#555" text-anchor="start" >WK</text><text x="1140.5" y="345.3" font-size="8" fill="#555" text-anchor="start" >12V</text><path d="M1130.3 357.2H1160.7V447.6H1130.3M1130.3 379.9H1160.7M1130.3 402.1H1160.7M1130.3 425.4H1160.7" fill="none" stroke="#555" stroke-width="1"/><text x="1145.5" y="367.5" font-size="8.5" fill="#444" text-anchor="middle" >EXT</text><text x="1145.5" y="377.5" font-size="10" fill="#222" text-anchor="middle" >*</text><text x="1145.5" y="390" font-size="8.5" fill="#444" text-anchor="middle" >EXT</text><path d="M1140.5 396H1150.5M1145.5 391V401" stroke="#222" stroke-width="1.3"/><text x="1145.5" y="413.3" font-size="9.5" fill="#333" text-anchor="middle" >5V</text><text x="1145.5" y="420.5" font-size="9.5" fill="#333" text-anchor="middle" >SW</text><text x="1145.5" y="435.5" font-size="9.5" fill="#333" text-anchor="middle" >A</text><text x="1145.5" y="444" font-size="9.5" fill="#333" text-anchor="middle" >GND</text><rect x="1128.90" y="370.20" width="4.2" height="4.2" fill="#666" stroke="#000" stroke-width="1.4"/><rect x="1128.90" y="414.90" width="4.2" height="4.2" fill="#666" stroke="#000" stroke-width="1.4"/><rect x="1128.90" y="438.30" width="4.2" height="4.2" fill="#666" stroke="#000" stroke-width="1.4"/><path d="M1288.5 334.8H1258.1V365.4H1288.5" fill="none" stroke="#555" stroke-width="1"/><text x="1273" y="346.5" font-size="11" fill="#222" text-anchor="middle" >+</text><text x="1273" y="361" font-size="11" fill="#222" text-anchor="middle" >-</text><rect x="1286.90" y="355.40" width="4.2" height="4.2" fill="#666" stroke="#000" stroke-width="1.4"/><path d="M1282.8 336.3L1295.2 348.7M1295.2 336.3L1282.8 348.7" stroke="#ff1a1a" stroke-width="1.5"/><text x="1258" y="346.5" font-size="12" fill="#444" text-anchor="end" >Power</text><path d="M1288.5 372.1H1258.1V410.3H1288.5" fill="none" stroke="#555" stroke-width="1"/><text x="1273" y="391.8" font-size="12" fill="#222" text-anchor="middle" >B</text><text x="1273" y="406.8" font-size="12" fill="#222" text-anchor="middle" >A</text><rect x="1286.90" y="385.20" width="4.2" height="4.2" fill="#666" stroke="#000" stroke-width="1.4"/><rect x="1286.90" y="400.40" width="4.2" height="4.2" fill="#666" stroke="#000" stroke-width="1.4"/><text x="1255" y="383.5" font-size="12" fill="#444" text-anchor="end" >Relay</text><path d="M1288.5 417.2H1258.1V499H1288.5" fill="none" stroke="#555" stroke-width="1"/><text x="1273.5" y="435.4" font-size="8.8" fill="#333" text-anchor="middle" >1D</text><rect x="1286.90" y="430.10" width="4.2" height="4.2" fill="#666" stroke="#000" stroke-width="1.4"/><text x="1273.5" y="450.34999999999997" font-size="8.8" fill="#333" text-anchor="middle" >2D</text><rect x="1286.90" y="445.05" width="4.2" height="4.2" fill="#666" stroke="#000" stroke-width="1.4"/><text x="1273.5" y="465.29999999999995" font-size="8.8" fill="#333" text-anchor="middle" >3D</text><rect x="1286.90" y="460.00" width="4.2" height="4.2" fill="#666" stroke="#000" stroke-width="1.4"/><text x="1273.5" y="480.24999999999994" font-size="8.8" fill="#333" text-anchor="middle" >4D</text><rect x="1286.90" y="474.95" width="4.2" height="4.2" fill="#666" stroke="#000" stroke-width="1.4"/><text x="1273.5" y="495.2" font-size="8.8" fill="#333" text-anchor="middle" >GND</text><rect x="1286.90" y="489.90" width="4.2" height="4.2" fill="#666" stroke="#000" stroke-width="1.4"/><text x="1255" y="428.5" font-size="12" fill="#444" text-anchor="end" >Digital</text><path d="M1288.5 507.4H1258.1V589.5H1288.5" fill="none" stroke="#555" stroke-width="1"/><path d="M1288.5 514.5H1265.9L1258.5 529.1L1265.9 544H1288.5ZM1288.5 544H1265.9L1258.5 559L1265.9 574H1288.5Z" fill="#e8e8e8" stroke="#555" stroke-width="1"/><text x="1273.5" y="525.1" font-size="8.8" fill="#333" text-anchor="middle" >1C</text><rect x="1286.90" y="519.80" width="4.2" height="4.2" fill="#666" stroke="#000" stroke-width="1.4"/><text x="1273.5" y="540.0500000000001" font-size="8.8" fill="#333" text-anchor="middle" >2C</text><rect x="1286.90" y="534.75" width="4.2" height="4.2" fill="#666" stroke="#000" stroke-width="1.4"/><text x="1273.5" y="555.0" font-size="8.8" fill="#333" text-anchor="middle" >3C</text><rect x="1286.90" y="549.70" width="4.2" height="4.2" fill="#666" stroke="#000" stroke-width="1.4"/><text x="1273.5" y="569.95" font-size="8.8" fill="#333" text-anchor="middle" >4C</text><rect x="1286.90" y="564.65" width="4.2" height="4.2" fill="#666" stroke="#000" stroke-width="1.4"/><text x="1273.5" y="584.9" font-size="8.8" fill="#333" text-anchor="middle" >GND</text><rect x="1286.90" y="579.60" width="4.2" height="4.2" fill="#666" stroke="#000" stroke-width="1.4"/><text x="1255" y="518" font-size="12" fill="#333" text-anchor="end" >Counters</text><text x="1253.3" y="533" font-size="10.5" fill="#222" text-anchor="end" >1PE</text><text x="1253.3" y="563" font-size="10.5" fill="#222" text-anchor="end" >2PE</text><path d="M1130.3 462.7H1153.6V530.0H1130.3" fill="none" stroke="#555" stroke-width="1"/><rect x="1128.90" y="475.30" width="4.2" height="4.2" fill="#666" stroke="#000" stroke-width="1.4"/><rect x="1128.90" y="490.25" width="4.2" height="4.2" fill="#666" stroke="#000" stroke-width="1.4"/><rect x="1128.90" y="505.20" width="4.2" height="4.2" fill="#666" stroke="#000" stroke-width="1.4"/><rect x="1128.90" y="520.15" width="4.2" height="4.2" fill="#666" stroke="#000" stroke-width="1.4"/><text x="1136" y="482.2" font-size="12.5" fill="#222" text-anchor="start" >*</text><path d="M1135.5 492.3H1141.5M1138.5 489.3V495.3" stroke="#222" stroke-width="1.3"/><path d="M1136 507.3H1140" stroke="#222" stroke-width="1.5"/><text x="1135.5" y="525.5" font-size="9" fill="#444" text-anchor="start" >#</text><text x="1161.9" y="481.0" font-size="12" fill="#333" text-anchor="start" >Analog 1</text><path d="M1130.3 545.15H1153.6V612.4499999999999H1130.3" fill="none" stroke="#555" stroke-width="1"/><rect x="1128.90" y="557.75" width="4.2" height="4.2" fill="#666" stroke="#000" stroke-width="1.4"/><rect x="1128.90" y="572.70" width="4.2" height="4.2" fill="#666" stroke="#000" stroke-width="1.4"/><rect x="1128.90" y="587.65" width="4.2" height="4.2" fill="#666" stroke="#000" stroke-width="1.4"/><rect x="1128.90" y="602.60" width="4.2" height="4.2" fill="#666" stroke="#000" stroke-width="1.4"/><text x="1136" y="564.65" font-size="12.5" fill="#222" text-anchor="start" >*</text><path d="M1135.5 574.75H1141.5M1138.5 571.75V577.75" stroke="#222" stroke-width="1.3"/><path d="M1136 589.75H1140" stroke="#222" stroke-width="1.5"/><text x="1135.5" y="607.9499999999999" font-size="9" fill="#444" text-anchor="start" >#</text><text x="1161.9" y="563.4499999999999" font-size="12" fill="#333" text-anchor="start" >Analog 2</text><path d="M1130.3 627.6H1153.6V694.9H1130.3" fill="none" stroke="#555" stroke-width="1"/><rect x="1128.90" y="640.20" width="4.2" height="4.2" fill="#666" stroke="#000" stroke-width="1.4"/><rect x="1128.90" y="655.15" width="4.2" height="4.2" fill="#666" stroke="#000" stroke-width="1.4"/><rect x="1128.90" y="670.10" width="4.2" height="4.2" fill="#666" stroke="#000" stroke-width="1.4"/><rect x="1128.90" y="685.05" width="4.2" height="4.2" fill="#666" stroke="#000" stroke-width="1.4"/><text x="1136" y="647.1" font-size="12.5" fill="#222" text-anchor="start" >*</text><path d="M1135.5 657.2H1141.5M1138.5 654.2V660.2" stroke="#222" stroke-width="1.3"/><path d="M1136 672.2H1140" stroke="#222" stroke-width="1.5"/><text x="1135.5" y="690.4" font-size="9" fill="#444" text-anchor="start" >#</text><text x="1161.9" y="645.9" font-size="12" fill="#333" text-anchor="start" >Analog 3</text><path d="M1130.3 710.05H1153.6V777.3499999999999H1130.3" fill="none" stroke="#555" stroke-width="1"/><rect x="1128.90" y="722.65" width="4.2" height="4.2" fill="#666" stroke="#000" stroke-width="1.4"/><rect x="1128.90" y="737.60" width="4.2" height="4.2" fill="#666" stroke="#000" stroke-width="1.4"/><rect x="1128.90" y="752.55" width="4.2" height="4.2" fill="#666" stroke="#000" stroke-width="1.4"/><rect x="1128.90" y="767.50" width="4.2" height="4.2" fill="#666" stroke="#000" stroke-width="1.4"/><text x="1136" y="729.55" font-size="12.5" fill="#222" text-anchor="start" >*</text><path d="M1135.5 739.65H1141.5M1138.5 736.65V742.65" stroke="#222" stroke-width="1.3"/><path d="M1136 754.65H1140" stroke="#222" stroke-width="1.5"/><text x="1135.5" y="772.8499999999999" font-size="9" fill="#444" text-anchor="start" >#</text><text x="1161.9" y="728.3499999999999" font-size="12" fill="#333" text-anchor="start" >Analog 4</text><path d="M1130.3 792.5H1153.6V859.8H1130.3" fill="none" stroke="#555" stroke-width="1"/><rect x="1128.90" y="805.10" width="4.2" height="4.2" fill="#666" stroke="#000" stroke-width="1.4"/><rect x="1128.90" y="820.05" width="4.2" height="4.2" fill="#666" stroke="#000" stroke-width="1.4"/><rect x="1128.90" y="835.00" width="4.2" height="4.2" fill="#666" stroke="#000" stroke-width="1.4"/><rect x="1128.90" y="849.95" width="4.2" height="4.2" fill="#666" stroke="#000" stroke-width="1.4"/><text x="1136" y="812.0" font-size="12.5" fill="#222" text-anchor="start" >*</text><path d="M1135.5 822.1H1141.5M1138.5 819.1V825.1" stroke="#222" stroke-width="1.3"/><path d="M1136 837.1H1140" stroke="#222" stroke-width="1.5"/><text x="1135.5" y="855.3" font-size="9" fill="#444" text-anchor="start" >#</text><text x="1161.9" y="810.8" font-size="12" fill="#333" text-anchor="start" >Analog 5</text><path d="M1288.5 597.4H1258.1V687.4H1288.5" fill="none" stroke="#555" stroke-width="1"/><text x="1273.5" y="615.0" font-size="8.8" fill="#333" text-anchor="middle" >5D</text><circle cx="1289" cy="611.8" r="11" fill="#ffe680" opacity=".45" filter="url(#blur)"/><circle cx="1289" cy="611.8" r="6.9" fill="#ffd500"/><text x="1273.5" y="629.95" font-size="8.8" fill="#333" text-anchor="middle" >6D</text><circle cx="1289" cy="626.75" r="11" fill="#ffe680" opacity=".45" filter="url(#blur)"/><circle cx="1289" cy="626.75" r="6.9" fill="#ffd500"/><text x="1273.5" y="644.9" font-size="8.8" fill="#333" text-anchor="middle" >7D</text><circle cx="1289" cy="641.6999999999999" r="11" fill="#ffe680" opacity=".45" filter="url(#blur)"/><circle cx="1289" cy="641.6999999999999" r="6.9" fill="#ffd500"/><text x="1273.5" y="659.85" font-size="8.8" fill="#333" text-anchor="middle" >8D</text><circle cx="1289" cy="656.65" r="11" fill="#ffe680" opacity=".45" filter="url(#blur)"/><circle cx="1289" cy="656.65" r="6.9" fill="#ffd500"/><text x="1273.5" y="674.8" font-size="8.8" fill="#333" text-anchor="middle" >GND</text><rect x="1286.90" y="669.50" width="4.2" height="4.2" fill="#666" stroke="#000" stroke-width="1.4"/><text x="1255" y="645.8" font-size="12" fill="#444" text-anchor="end" >Digital</text><path d="M1288.5 695.1H1258.1V785.1H1288.5" fill="none" stroke="#555" stroke-width="1"/><text x="1273.5" y="713.1" font-size="8.8" fill="#333" text-anchor="middle" >Tx</text><rect x="1286.90" y="707.80" width="4.2" height="4.2" fill="#666" stroke="#000" stroke-width="1.4"/><text x="1273.5" y="728.0500000000001" font-size="8.8" fill="#333" text-anchor="middle" >Rx</text><rect x="1286.90" y="722.75" width="4.2" height="4.2" fill="#666" stroke="#000" stroke-width="1.4"/><text x="1273.5" y="743.0" font-size="8.8" fill="#333" text-anchor="middle" >RTS</text><rect x="1286.90" y="737.70" width="4.2" height="4.2" fill="#666" stroke="#000" stroke-width="1.4"/><text x="1273.5" y="757.95" font-size="8.8" fill="#333" text-anchor="middle" >CTS</text><rect x="1286.90" y="752.65" width="4.2" height="4.2" fill="#666" stroke="#000" stroke-width="1.4"/><text x="1273.5" y="772.9" font-size="8.8" fill="#333" text-anchor="middle" >GND</text><rect x="1286.90" y="767.60" width="4.2" height="4.2" fill="#666" stroke="#000" stroke-width="1.4"/><text x="0" y="0" font-size="9" fill="#333" text-anchor="middle" transform="translate(1253 733) rotate(-90)">SERIAL PORT</text><path d="M1288.5 815.1H1258.4V845.3H1288.5" fill="none" stroke="#555" stroke-width="1"/><rect x="1286.40" y="827.90" width="4.2" height="4.2" fill="#666" stroke="#000" stroke-width="1.4"/><text x="0" y="0" font-size="9" fill="#333" text-anchor="middle" transform="translate(1253.3 830) rotate(-90)">SERIAL DB9M</text><text x="1213.8" y="895" font-size="15" fill="#222" text-anchor="middle" >DataTaker</text><text x="1213.8" y="917" font-size="15" fill="#222" text-anchor="middle" >DT80</text><path d="M568.3 143V1030M5 665.3H1530" stroke="#2a2a2a" stroke-width="1.2" stroke-dasharray="3 3" stroke-dashoffset="-0.6"/><path d="M538.6 642.8L545.3 620.2H568.3" fill="none" stroke="#7b4812" stroke-width="2"/><circle cx="545.3" cy="620.2" r="1.5" fill="#5a3a10"/><path d="M538.6 642.8H568.3" stroke="#000" stroke-width="1.6"/><path d="M538.6 642.8L545.3 665.3" fill="none" stroke="#ff8c00" stroke-width="1.5"/><path d="M545.3 665.3H568.3" stroke="#ffa040" stroke-width="7" opacity=".55" filter="url(#blur2)"/><path d="M545.3 665.3H568.3" stroke="#ff8a00" stroke-width="3"/><path d="M561.3 613.2L575.3 627.2M575.3 613.2L561.3 627.2" stroke="#ff1a1a" stroke-width="1.5"/><path d="M561.3 635.8L575.3 649.8M575.3 635.8L561.3 649.8" stroke="#ff1a1a" stroke-width="1.5"/><path d="M561.3 658.3L575.3 672.3M575.3 658.3L561.3 672.3" stroke="#ff1a1a" stroke-width="1.5"/><circle cx="568.3" cy="620.2" r="1.3" fill="#7b4812"/><circle cx="568.3" cy="642.8" r="1.6" fill="#000"/><circle cx="568.8" cy="665.3" r="10.9" fill="none" stroke="#0000ff" stroke-width="2" stroke-dasharray="2 1.6"/></g></g><rect x="3" y="143" width="2" height="888" fill="#000"/><rect x="3" y="1030" width="1528" height="1.5" fill="#000"/><rect x="1530" y="143" width="1" height="888" fill="#000"/></svg><div class="a" style="left:4px;top:143px;width:265px;height:467.5px;background:#ffe8e8;border:2px solid #6e6a6a;border-top-width:1.5px;box-shadow:3px 4px 7px rgba(0,0,0,.4)"></div><div class="txt" style="left:56px;top:160.2px;font-size:15px;color:#111;font-weight:bold;">Electrical Properties:</div><div class="txt" style="left:24.4px;top:187.0px;font-size:12px;color:#222;font-weight:normal;">Type</div><div class="txt" style="right:1274px;top:187.0px;font-size:12px;color:#222;font-weight:normal;">Port</div><div class="txt" style="left:24.4px;top:203.0px;font-size:12px;color:#222;font-weight:normal;">Name</div><div class="txt" style="right:1274px;top:203.0px;font-size:12px;color:#222;font-weight:normal;">SDI-12</div><div class="txt" style="left:24.4px;top:219.0px;font-size:12px;color:#222;font-weight:normal;">Bus Limit</div><div class="txt" style="right:1274px;top:219.0px;font-size:12px;color:#222;font-weight:normal;">10</div><div class="txt" style="left:24.4px;top:235.0px;font-size:12px;color:#222;font-weight:normal;">Max Distance</div><div class="txt" style="right:1274px;top:235.0px;font-size:12px;color:#222;font-weight:normal;">100m</div><div class="txt" style="left:24.4px;top:251.0px;font-size:12px;color:#222;font-weight:normal;">Connections</div><div class="txt" style="right:1274px;top:251.0px;font-size:12px;color:#222;font-weight:normal;">Data, REF</div><div class="txt" style="right:1274px;top:282.5px;font-size:12px;color:#ee1111;font-weight:bold;">[ Data ] requires [ Ref ] to be connected</div><div class="txt" style="left:24.4px;top:314.59999999999997px;font-size:12px;color:#222;font-weight:normal;">Warn if not connected</div><div class="txt" style="right:1274px;top:314.59999999999997px;font-size:12px;color:#222;font-weight:normal;">true</div><div class="txt" style="left:24.4px;top:346.5px;font-size:12px;color:#111;font-weight:bold;border-bottom:2px solid #6a6363;padding-bottom:1px">Measurements</div><div class="txt" style="left:24.4px;top:371.09999999999997px;font-size:12px;color:#222;font-weight:normal;">Solar Radiation</div><div class="txt" style="right:1274px;top:371.09999999999997px;font-size:12px;color:#222;font-weight:normal;">(0 - 1750) W / m2</div><div class="txt" style="left:24.4px;top:387.09999999999997px;font-size:12px;color:#222;font-weight:normal;">Precipitation</div><div class="txt" style="right:1274px;top:387.09999999999997px;font-size:12px;color:#222;font-weight:normal;">(0 - 400) mm / hr</div><div class="txt" style="left:24.4px;top:403.09999999999997px;font-size:12px;color:#222;font-weight:normal;">Vapour Pressure</div><div class="txt" style="right:1274px;top:403.09999999999997px;font-size:12px;color:#222;font-weight:normal;">(0 - 47) kPa</div><div class="txt" style="left:24.4px;top:419.09999999999997px;font-size:12px;color:#222;font-weight:normal;">Relative Humidity</div><div class="txt" style="right:1274px;top:419.09999999999997px;font-size:12px;color:#222;font-weight:normal;">(0 - 100) %</div><div class="txt" style="left:24.4px;top:435.09999999999997px;font-size:12px;color:#222;font-weight:normal;">Air Temperature</div><div class="txt" style="right:1274px;top:435.09999999999997px;font-size:12px;color:#222;font-weight:normal;">(-50 - 60) °C</div><div class="txt" style="left:24.4px;top:451.09999999999997px;font-size:12px;color:#222;font-weight:normal;">Barometric Pressure</div><div class="txt" style="right:1274px;top:451.09999999999997px;font-size:12px;color:#222;font-weight:normal;">(50 - 110) kPa</div><div class="txt" style="left:24.4px;top:467.09999999999997px;font-size:12px;color:#222;font-weight:normal;">Wind Speed</div><div class="txt" style="right:1274px;top:467.09999999999997px;font-size:12px;color:#222;font-weight:normal;">(0 - 30) m &#8725; s</div><div class="txt" style="left:24.4px;top:483.09999999999997px;font-size:12px;color:#222;font-weight:normal;">Wind Direction</div><div class="txt" style="right:1274px;top:483.09999999999997px;font-size:12px;color:#222;font-weight:normal;">(0 - 360) °</div><div class="txt" style="left:24.4px;top:499.09999999999997px;font-size:12px;color:#222;font-weight:normal;">Tilt</div><div class="txt" style="right:1274px;top:499.09999999999997px;font-size:12px;color:#222;font-weight:normal;">(-90 - 90) °</div><div class="txt" style="left:24.4px;top:515.1px;font-size:12px;color:#222;font-weight:normal;">Lightening Strikes</div><div class="txt" style="right:1274px;top:515.1px;font-size:12px;color:#222;font-weight:normal;">(0 - 65535) Strikes</div><div class="txt" style="left:24.4px;top:531.1px;font-size:12px;color:#222;font-weight:normal;">Lightening Stike Distance</div><div class="txt" style="right:1274px;top:531.1px;font-size:12px;color:#222;font-weight:normal;">(0 - 40) km</div><div class="txt" style="left:24.4px;top:563.3000000000001px;font-size:12px;color:#111;font-weight:bold;border-bottom:2px solid #6a6363;padding-bottom:1px">Protocols</div><div class="txt" style="left:24.4px;top:586.7px;font-size:12px;color:#222;font-weight:normal;">SDI-12 Slave</div><div class="a" style="left:1052px;top:143.5px;width:479px;height:76px;background:#fffde1;border-left:1.5px solid #333;border-bottom:2px solid #222;border-right:1.5px solid #000;box-shadow:-2px 4px 6px rgba(0,0,0,.4)"></div><div class="txt" style="left:994px;width:600px;text-align:center;top:147.7px;font-size:15px;color:#111;font-weight:bold;">2 Connected Points:&nbsp; (Index: 2)</div><div class="txt" style="left:1068px;top:172.7px;font-size:12px;color:#444;font-weight:normal;font-style:italic">1:&nbsp; ATMOS SDI-12 Data (wire)</div><div class="a" style="left:1062.5px;top:186px;width:460px;height:19px;background:#ffc1c1;border:1px solid #333"></div><div class="txt" style="left:1068px;top:190.7px;font-size:12px;color:#111;font-weight:bold;font-style:italic">2:&nbsp; SDI-12_Data ( Weather Stations 1::Top Level) (Internal Connection) &nbsp; [ ✓ ]</div></div></body></html>
